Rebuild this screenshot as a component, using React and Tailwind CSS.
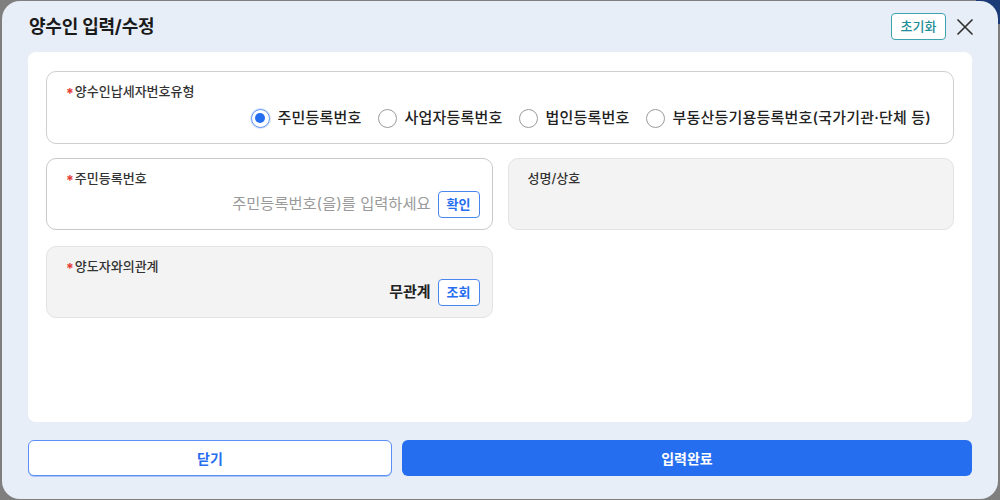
const font = { fontFamily: 'Inter, "Noto Sans CJK KR", "Noto Sans", sans-serif' };

function Label({ children, required }) {
  return (
    <div className="flex items-center h-[18px] text-[13px] font-medium text-[#333] leading-none">
      {required && <span className="text-[#e53935] text-[14px] font-bold mr-[1px] mt-[6px]">*</span>}
      {children}
    </div>
  );
}

function Radio({ checked, label }) {
  return (
    <label className="flex items-center gap-[8px]">
      {checked ? (
        <span className="w-[19px] h-[19px] rounded-full border-[1.5px] border-[#5b8ff5] flex items-center justify-center shadow-[0_0_0_1px_#dbe7fd]">
          <span className="w-[10px] h-[10px] rounded-full bg-[#256ef0]" />
        </span>
      ) : (
        <span className="w-[19px] h-[19px] rounded-full border-[1.5px] border-[#9a9a9a] bg-white" />
      )}
      <span className="text-[15px] font-medium text-[#222] tracking-[0.2px]">{label}</span>
    </label>
  );
}

function SmallButton({ children }) {
  return (
    <button className="h-[27px] px-[8px] rounded-[4px] border border-[#4a86f0] bg-white text-[13px] font-bold text-[#256ef0]">
      {children}
    </button>
  );
}

export default function App() {
  return (
    <div className="relative w-[1000px] h-[500px] bg-[#7f7f7f] overflow-hidden" style={font}>
      <div className="absolute top-0 right-0 w-[24px] h-[24px] bg-[#1c3a78]" />
      <div className="relative ml-[2px] mr-[2px] mt-[1px] h-[498px] rounded-[18px] bg-[#e8eef8] flex flex-col">
        {/* Header */}
        <div className="h-[51px] flex items-center pl-[27px] pr-[25px]">
          <h1 className="text-[18px] font-bold text-[#1a1a1a] tracking-[-0.2px]">양수인 입력/수정</h1>
          <div className="ml-auto flex items-center gap-[11px]">
            <button className="h-[27px] w-[55px] rounded-[4px] border border-[#3aa3ad] bg-white text-[13px] font-medium text-[#1f8d98]">
              초기화
            </button>
            <svg width="16" height="16" viewBox="0 0 16 16" className="text-[#333]">
              <path d="M1 1L15 15M15 1L1 15" stroke="currentColor" strokeWidth="1.7" strokeLinecap="round" />
            </svg>
          </div>
        </div>

        {/* Body */}
        <div className="mx-[26px] h-[370px] rounded-[8px] bg-white px-[18px] pt-[19px]">
          <div className="h-[73px] rounded-[10px] border border-[#cfcfcf] pl-[19px] pr-[22px] pt-[10px]">
            <Label required>양수인납세자번호유형</Label>
            <div className="mt-[5px] h-[26px] flex items-center justify-end gap-[16px]">
              <Radio checked label="주민등록번호" />
              <Radio label="사업자등록번호" />
              <Radio label="법인등록번호" />
              <Radio label="부동산등기용등록번호(국가기관·단체 등)" />
            </div>
          </div>

          <div className="mt-[14px] grid grid-cols-2 gap-x-[15px] gap-y-[16px]">
            <div className="h-[72px] rounded-[10px] border border-[#c9c9c9] bg-white pl-[19px] pr-[12px] pt-[10px]">
              <Label required>주민등록번호</Label>
              <div className="mt-[4px] flex items-center justify-end gap-[7px]">
                <span className="text-[15.3px] text-[#9a9a9a]">주민등록번호(을)를 입력하세요</span>
                <SmallButton>확인</SmallButton>
              </div>
            </div>
            <div className="h-[72px] rounded-[10px] border border-[#e3e3e3] bg-[#f3f3f3] pl-[19px] pr-[12px] pt-[10px]">
              <Label>성명/상호</Label>
            </div>
            <div className="h-[72px] rounded-[10px] border border-[#e3e3e3] bg-[#f3f3f3] pl-[19px] pr-[12px] pt-[10px]">
              <Label required>양도자와의관계</Label>
              <div className="mt-[4px] flex items-center justify-end gap-[7px]">
                <span className="text-[15px] font-bold text-[#222]">무관계</span>
                <SmallButton>조회</SmallButton>
              </div>
            </div>
          </div>
        </div>

        {/* Footer */}
        <div className="mx-[26px] mt-[18px] flex gap-[10px]">
          <button className="w-[364px] h-[36px] rounded-[6px] border border-[#5b8ff5] bg-white text-[14px] font-bold text-[#256ef0] shadow-[0_1px_0_#a9c4f7]">
            닫기
          </button>
          <button className="flex-1 h-[36px] rounded-[6px] bg-[#256ef0] text-[14px] font-bold text-white">
            입력완료
          </button>
        </div>
      </div>
    </div>
  );
}
